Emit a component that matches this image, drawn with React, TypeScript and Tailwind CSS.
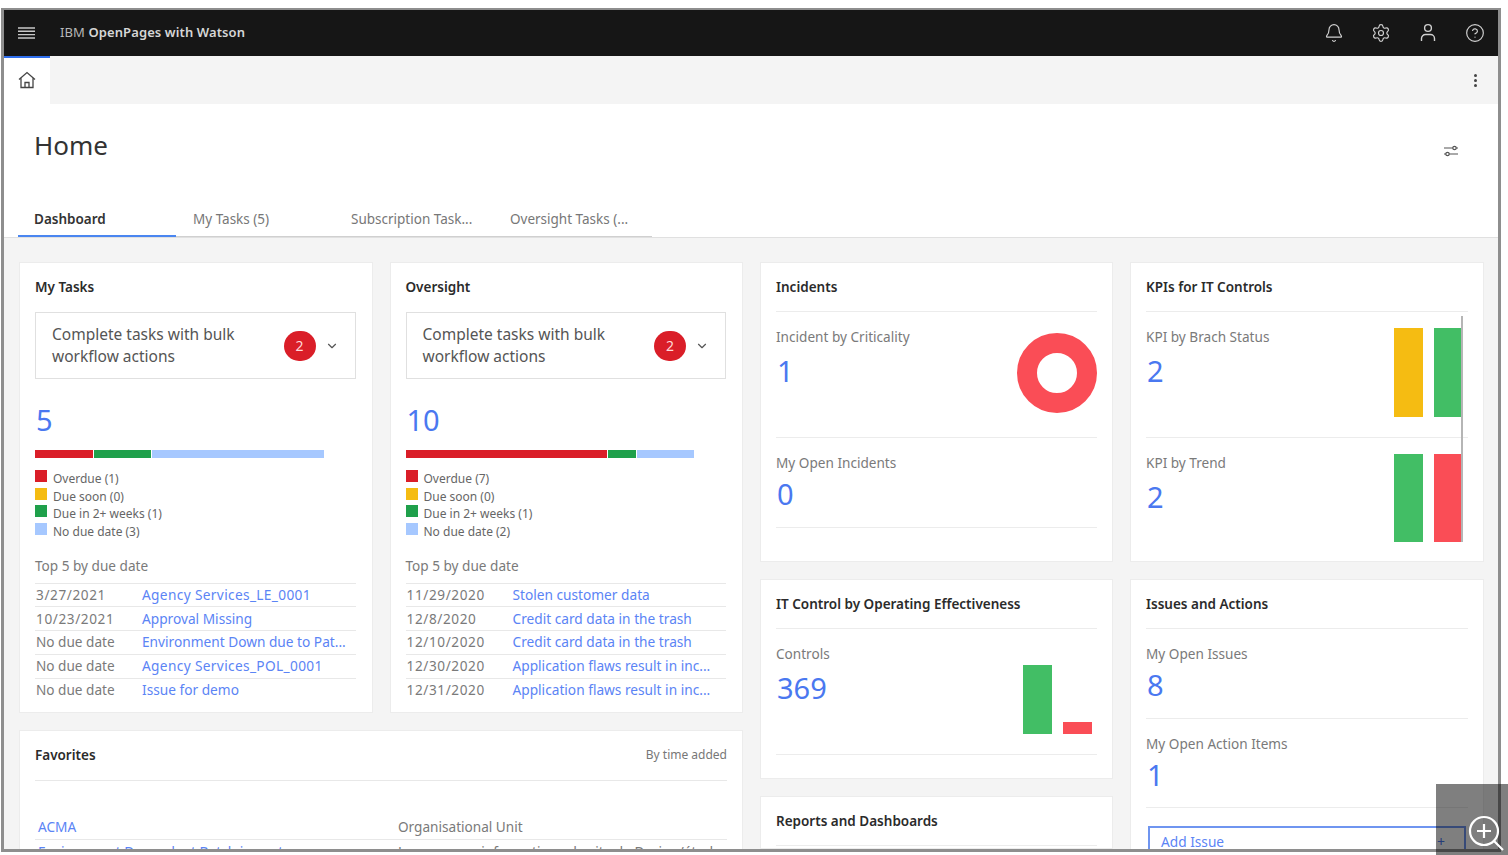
import { Bell, ChevronDown, CircleHelp, Settings } from 'lucide-react'

const bold = 'text-[13.5px] leading-[18px] font-semibold text-[#2b2b2b]'
const muted = 'text-[13.6px] leading-[18px] text-[#7a7a7a]'
const link = 'text-[13.7px] leading-[18px] text-[#5b84f5]'
const big = 'text-[29px] leading-[36px] text-[#4a78f0] pl-[1px]'

const RED = '#da1e28'
const GREEN = '#1fa04b'
const YELLOW = '#f5bc12'
const SKY = '#a6c8ff'

type Task = [string, string]

const myTasks: Task[] = [
  ['3/27/2021', 'Agency Services_LE_0001'],
  ['10/23/2021', 'Approval Missing'],
  ['No due date', 'Environment Down due to Pat...'],
  ['No due date', 'Agency Services_POL_0001'],
  ['No due date', 'Issue for demo'],
]

const oversightTasks: Task[] = [
  ['11/29/2020', 'Stolen customer data'],
  ['12/8/2020', 'Credit card data in the trash'],
  ['12/10/2020', 'Credit card data in the trash'],
  ['12/30/2020', 'Application flaws result in inc...'],
  ['12/31/2020', 'Application flaws result in inc...'],
]

const TaskCard = ({ title, total, bars, legend, rows }: {
  title: string
  total: string
  bars: [number, string][]
  legend: [string, string][]
  rows: Task[]
}) => (
  <div className="h-[451px] bg-white border border-[#ececec] pl-[15px] pr-[16px] pt-[15px]">
    <div className={bold}>{title}</div>

    <div className="mt-4 h-[67px] border border-[#e0e0e0] pl-4 pr-[16px] flex items-center justify-between">
      <div className="text-[15.5px] leading-[22px] text-[#555] pb-[2px]">Complete tasks with bulk<br />workflow actions</div>
      <div className="flex items-center gap-[9px]">
        <div className="w-8 h-[30px] rounded-full bg-[#da1e28] flex items-center justify-center text-[14px] text-[#ffd9d9]">2</div>
        <ChevronDown className="w-[14px] h-[14px] text-[#555]" />
      </div>
    </div>

    <div className={`${big} mt-[23px]`}>{total}</div>

    <div className="mt-[12px] flex gap-[1px] h-2">
      {bars.map(([width, color], i) => (
        <div key={i} className="h-2" style={{ width, background: color }} />
      ))}
    </div>

    <div className="mt-[11px] flex flex-col">
      {legend.map(([label, color]) => (
        <div key={label} className="h-[17.7px] flex items-start gap-[6px] text-[12px] leading-[19px] text-[#666]">
          <div className="w-3 h-3 mt-[1px]" style={{ background: color }} />
          {label}
        </div>
      ))}
    </div>

    <div className={`${muted} mt-[17px] mb-[8px]`}>Top 5 by due date</div>
    {rows.map(([date, name], i) => (
      <div key={i} className="h-[23.7px] border-t border-[#e8e8e8] flex items-center pl-[1px]">
        <div className={`${muted} w-[106px] shrink-0 ${/\d/.test(date) ? 'tracking-[0.6px]' : ''}`}>{date}</div>
        <div className={`${link} whitespace-nowrap ${/\d/.test(name) ? 'tracking-[0.35px]' : ''}`}>{name}</div>
      </div>
    ))}
  </div>
)

const Stat = ({ label, value, h, numTop = 'mt-[7px]', line = true }: {
  label: string
  value: string
  h: string
  numTop?: string
  line?: boolean
}) => (
  <div className={`${h} pt-[16px] ${line ? 'border-b border-[#ececec]' : ''}`}>
    <div className={muted}>{label}</div>
    <div className={`${big} ${numTop}`}>{value}</div>
  </div>
)

const CardTitle = ({ children }: { children: string }) => (
  <div className={`${bold} pb-[15px] border-b border-[#ececec]`}>{children}</div>
)

const BarPair = ({ left, right, top, leftH, rightH }: { left: string; right: string; top: string; leftH: string; rightH: string }) => (
  <div className={`absolute right-[20px] ${top} flex items-end gap-[11px]`}>
    <div className={`w-[29px] ${leftH}`} style={{ background: left }} />
    <div className={`w-[29px] ${rightH}`} style={{ background: right }} />
  </div>
)

const App = () => {
  return (
    <div className="w-[1508px] h-[855px] bg-white overflow-hidden relative pt-2 pb-[3px] pl-[1px] pr-[7px] font-['Noto_Sans',sans-serif]">
      <div className="h-full border-[3px] border-t-[2px] border-[#8e8e8e] overflow-hidden flex flex-col bg-[#f4f4f4]">
        {/* Header */}
        <div className="h-[46px] shrink-0 bg-[#161616] flex items-center pl-[14px] pr-[13px] text-[#d6d6d6]">
          <svg width="17" height="14" viewBox="0 0 17 14" fill="none" stroke="#c8c8c8" strokeWidth="1.4">
            <path d="M0 2h17M0 5.3h17M0 8.6h17M0 12h17" />
          </svg>
          <div className="ml-[25px] text-[13px] tracking-[0.1px]">
            <span className="text-[#b8b8b8]">IBM </span><span className="font-semibold">OpenPages with Watson</span>
          </div>
          <div className="ml-auto flex items-center gap-[27px] text-[#d0d0d0]">
            <Bell className="w-5 h-5" strokeWidth={1.4} />
            <Settings className="w-5 h-5" strokeWidth={1.4} />
            <svg width="20" height="20" viewBox="0 0 20 20" fill="none" stroke="currentColor" strokeWidth="1.4">
              <circle cx="10" cy="5" r="3.4" />
              <path d="M3.5 18v-2.5a4 4 0 0 1 4-4h5a4 4 0 0 1 4 4V18" />
            </svg>
            <CircleHelp className="w-5 h-5" strokeWidth={1.4} />
          </div>
        </div>

        {/* Open tabs */}
        <div className="h-[48px] shrink-0 flex bg-[#f4f4f4]">
          <div className="w-[46px] bg-white border-t-2 border-[#2f6fed] flex items-center justify-center pb-[2px] pr-[1px]">
            <svg width="18" height="18" viewBox="0 0 18 18" fill="none" stroke="#444" strokeWidth="1.3">
              <path d="M1 8.5 9 1.5l8 7M3 7v9.5h12V7M7 16.5v-5h4v5" />
            </svg>
          </div>
          <div className="ml-auto w-[45px] flex items-center justify-center">
            <div className="flex flex-col gap-[2px]">
              <div className="w-[3px] h-[3px] rounded-full bg-[#444]" />
              <div className="w-[3px] h-[3px] rounded-full bg-[#444]" />
              <div className="w-[3px] h-[3px] rounded-full bg-[#444]" />
            </div>
          </div>
        </div>

        {/* Page title and tabs */}
        <div className="h-[134px] shrink-0 bg-white border-b border-[#e0e0e0] flex flex-col">
          <div className="flex items-start justify-between pl-[30px] pr-[39px] pt-[23px]">
            <div className="text-[26px] leading-[36px] text-[#333]">Home</div>
            <svg className="mt-[17px]" width="16" height="14" viewBox="0 0 16 14" fill="none" stroke="#555" strokeWidth="1.2">
              <path d="M1 4h9M13 4h2M1 10h2M6 10h9" />
              <circle cx="11.5" cy="4" r="1.7" />
              <circle cx="4.5" cy="10" r="1.7" />
            </svg>
          </div>
          <div className="mt-auto ml-[14px] flex text-[13.5px] leading-[18px] h-[36px] text-[#777]">
            <div className="w-[158px] pl-4 pt-[9px] font-semibold text-[#333] border-b-2 border-[#4a86f0]">Dashboard</div>
            <div className="w-[158px] pl-[17px] pt-[9px] border-b border-[#d0d0d0]">My Tasks (5)</div>
            <div className="w-[159px] pl-[17px] pt-[9px] border-b border-[#d0d0d0]">Subscription Task...</div>
            <div className="w-[159px] pl-[17px] pt-[9px] border-b border-[#d0d0d0]">Oversight Tasks (...</div>
          </div>
        </div>

        {/* Dashboard */}
        <div className="flex-1 min-h-0 pl-[15px] pt-[24px] flex gap-[17px] w-[1481px] overflow-hidden">
          <div className="w-[724px] shrink-0 flex flex-col gap-[17px]">
            <div className="grid grid-cols-2 gap-[17px]">
              <TaskCard
                title="My Tasks"
                total="5"
                bars={[[58, RED], [57, GREEN], [172, SKY]]}
                legend={[['Overdue (1)', RED], ['Due soon (0)', YELLOW], ['Due in 2+ weeks (1)', GREEN], ['No due date (3)', SKY]]}
                rows={myTasks}
              />
              <TaskCard
                title="Oversight"
                total="10"
                bars={[[201, RED], [28, GREEN], [57, SKY]]}
                legend={[['Overdue (7)', RED], ['Due soon (0)', YELLOW], ['Due in 2+ weeks (1)', GREEN], ['No due date (2)', SKY]]}
                rows={oversightTasks}
              />
            </div>

            <div className="flex-1 bg-white border border-[#ececec] px-[15px] pt-[15px]">
              <div className="flex items-center justify-between pb-4 border-b border-[#e8e8e8]">
                <div className={bold}>Favorites</div>
                <div className="text-[12px] leading-[18px] text-[#777]">By time added</div>
              </div>
              <div className="mt-[37px] flex border-b border-[#e8e8e8] pb-[3px] pl-[3px]">
                <div className={`${link} w-[360px]`}>ACMA</div>
                <div className={muted}>Organisational Unit</div>
              </div>
              <div className="flex pl-[3px] pt-[3px]">
                <div className={`${link} w-[360px]`}>Environment Dependent Batch import</div>
                <div className={muted}>Les serveurs informatique du site de Design/étude</div>
              </div>
            </div>
          </div>

          <div className="w-[353px] shrink-0 flex flex-col gap-[17px]">
            <div className="relative h-[300px] shrink-0 bg-white border border-[#ececec] px-[15px] pt-[15px]">
              <CardTitle>Incidents</CardTitle>
              <Stat label="Incident by Criticality" value="1" h="h-[126px]" />
              <div className="w-full h-[90px] border-b border-[#ececec] pt-[16px]">
                <div className={muted}>My Open Incidents</div>
                <div className={`${big} mt-[4px]`}>0</div>
              </div>
              <div className="absolute left-[256px] top-[70px] w-20 h-20 rounded-full border-[20px] border-[#fa4d56]" />
            </div>

            <div className="relative h-[200px] shrink-0 bg-white border border-[#ececec] px-[15px] pt-[15px]">
              <CardTitle>IT Control by Operating Effectiveness</CardTitle>
              <Stat label="Controls" value="369" h="h-[126px]" />
              <BarPair left="#42be65" right="#fa4d56" top="top-[85px]" leftH="h-[69px]" rightH="h-[12px]" />
            </div>

            <div className="flex-1 bg-white border border-[#ececec] px-[15px] pt-[15px]">
              <CardTitle>Reports and Dashboards</CardTitle>
            </div>
          </div>

          <div className="w-[354px] shrink-0 flex flex-col gap-[17px]">
            <div className="relative h-[300px] shrink-0 bg-white border border-[#ececec] px-[15px] pt-[15px]">
              <CardTitle>KPIs for IT Controls</CardTitle>
              <Stat label="KPI by Brach Status" value="2" h="h-[126px]" />
              <Stat label="KPI by Trend" value="2" h="h-[90px]" line={false} />
              <BarPair left={YELLOW} right="#42be65" top="top-[65px]" leftH="h-[89px]" rightH="h-[89px]" />
              <BarPair left="#42be65" right="#fa4d56" top="top-[191px]" leftH="h-[88px]" rightH="h-[88px]" />
              <div className="absolute left-[330px] top-[53px] w-[2px] h-[226px] bg-[#b5b5b5]" />
            </div>

            <div className="flex-1 bg-white border border-[#ececec] px-[15px] pt-[15px]">
              <CardTitle>Issues and Actions</CardTitle>
              <Stat label="My Open Issues" value="8" h="h-[90px]" numTop="mt-[4px]" />
              <Stat label="My Open Action Items" value="1" h="h-[89px]" numTop="mt-[4px]" />
              <div className="mt-[18px] mx-[2px] h-[40px] border-2 border-[#6f95f0] pl-[11px] pr-[19px] flex items-start justify-between pt-[5px]">
                <span className={link}>Add Issue</span>
                <span className="text-[14px] leading-[18px] text-[#4a78f0]">+</span>
              </div>
            </div>
          </div>
        </div>
      </div>

      {/* Zoom control over the screenshot */}
      <div className="absolute right-0 bottom-0 w-[72px] h-[71px] bg-[#000000]/50 flex items-end justify-end">
        <svg width="40" height="40" viewBox="0 0 40 40" fill="none" stroke="#fff" strokeWidth="2.2">
          <circle cx="16" cy="16" r="14" />
          <path d="M16 9v14M9 16h14M26 26l9 9" />
        </svg>
      </div>
    </div>
  )
}

export default App
